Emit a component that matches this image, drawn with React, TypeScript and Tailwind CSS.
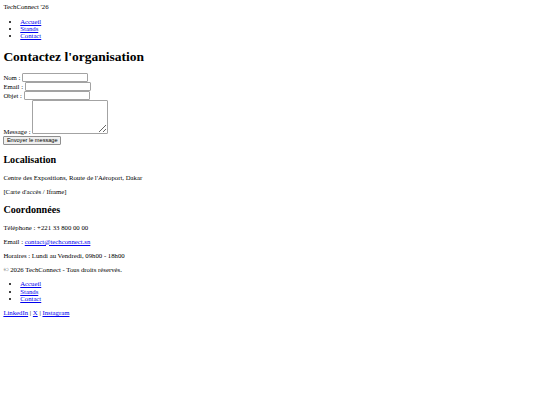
import React from "react";

const linkCls = "text-[#0000ee] underline";

function NavList() {
  return (
    <ul className="list-disc pl-[16.875px] my-[6.75px]">
      <li><a href="#" className={linkCls}>Accueil</a></li>
      <li><a href="#" className={linkCls}>Stands</a></li>
      <li><a href="#" className={linkCls}>Contact</a></li>
    </ul>
  );
}

const inputCls =
  "inline-block align-baseline w-[66px] h-[9px] border border-[#a3a3a3] bg-white rounded-[1px] text-[5.6px] px-[1px]";

export default function App() {
  return (
    <div className="min-h-[405px] bg-white p-[3.375px] font-['Liberation_Serif',serif] text-[6.75px] leading-[1.1] text-black">
      <header>
        <div>TechConnect '26</div>
        <nav>
          <NavList />
        </nav>
      </header>
      <main>
        <h1 className="text-[13.5px] font-bold my-[9.05px] leading-[1.15]">Contactez l'organisation</h1>
        <form onSubmit={(e) => e.preventDefault()}>
          <label>Nom : </label>
          <input type="text" className={inputCls} />
          <br />
          <label>Email : </label>
          <input type="email" className={inputCls} />
          <br />
          <label>Objet : </label>
          <input type="text" className={inputCls} />
          <br />
          <label>Message : </label>
          <textarea className="inline-block align-baseline w-[76px] h-[34px] border border-[#a3a3a3] bg-white rounded-[1px] resize-y"></textarea>
          <br />
          <button
            type="submit"
            className="inline-block h-[9px] px-[2.5px] border border-[#8f8f8f] bg-[#efefef] rounded-[1px] font-['Liberation_Sans',sans-serif] text-[5.6px] leading-[1] align-baseline"
          >
            Envoyer le message
          </button>
        </form>
        <section>
          <h2 className="text-[10.125px] font-bold my-[8.4px] leading-[1.15]">Localisation</h2>
          <p className="my-[6.75px]">Centre des Expositions, Route de l'Aéroport, Dakar</p>
          <p className="my-[6.75px]">[Carte d'accès / Iframe]</p>
        </section>
        <section>
          <h2 className="text-[10.125px] font-bold my-[8.4px] leading-[1.15]">Coordonnées</h2>
          <p className="my-[6.75px]">Téléphone : +221 33 800 00 00</p>
          <p className="my-[6.75px]">
            Email : <a href="#" className={linkCls}>contact@techconnect.sn</a>
          </p>
          <p className="my-[6.75px]">Horaires : Lundi au Vendredi, 09h00 - 18h00</p>
        </section>
      </main>
      <footer>
        <p className="my-[6.75px]">© 2026 TechConnect - Tous droits réservés.</p>
        <NavList />
        <p className="my-[6.75px]">
          <a href="#" className={linkCls}>LinkedIn</a> | <a href="#" className={linkCls}>X</a> |{" "}
          <a href="#" className={linkCls}>Instagram</a>
        </p>
      </footer>
    </div>
  );
}
